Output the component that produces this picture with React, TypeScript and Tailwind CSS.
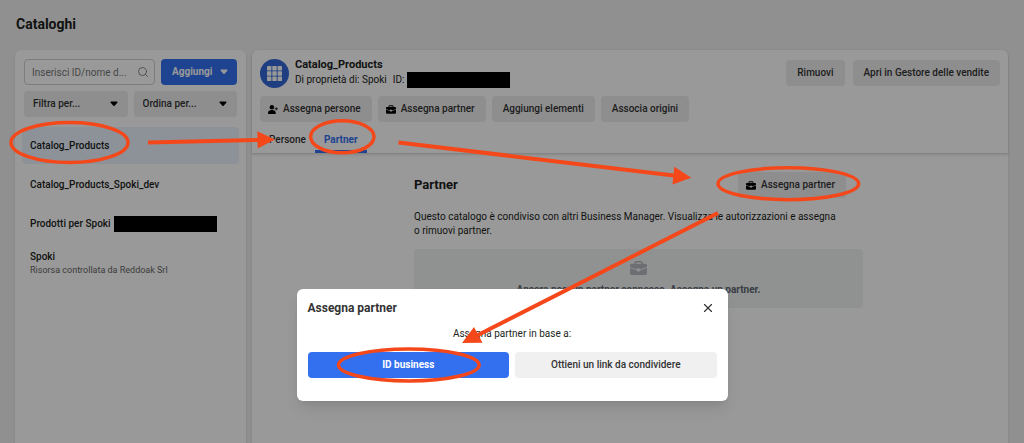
import React, { useState } from 'react';
import { Search, X } from 'lucide-react';
import { clsx } from 'clsx';

const catalogs = [
  { name: 'Catalog_Products' },
  { name: 'Catalog_Products_Spoki_dev' },
  { name: 'Prodotti per Spoki', redacted: true },
  { name: 'Spoki', note: 'Risorsa controllata da Reddoak Srl' },
];

const tabs = ['Persone', 'Partner'];

const greyButton = 'h-[26px] flex items-center justify-center rounded bg-[#ededed] font-medium text-[#333] whitespace-nowrap';
const iconButton = 'pl-2 pr-[11px] gap-[5px]';

function Caret({ className }: { className?: string }) {
  return (
    <svg viewBox="0 0 8 6" className={clsx('w-2 h-[6px]', className)} fill="currentColor" aria-hidden="true">
      <path d="M1.2 .5h5.6c.7 0 1 .8.5 1.3L4.6 4.7a.85.85 0 0 1-1.2 0L.7 1.8C.2 1.3.5.5 1.2.5Z" />
    </svg>
  );
}

function Briefcase({ className }: { className?: string }) {
  return (
    <svg viewBox="0 0 18 15" className={className} fill="currentColor" aria-hidden="true">
      <path fillRule="evenodd" d="M4.500 3V2a2 2 0 0 1 2-2h5a2 2 0 0 1 2 2v1h3A1.500 1.500 0 0 1 18 4.500V6.500L11 9.200V8H7v1.200L0 6.500V4.500A1.500 1.500 0 0 1 1.500 3Zm1.500 0h6V2.200a.7.7 0 0 0-.7-.7H6.700a.7.7 0 0 0-.7.7V3Z" />
      <path d="M0 7.300 7.200 10.200Q9 12.600 10.800 10.200L18 7.300v6.200a1.500 1.500 0 0 1-1.500 1.500h-15A1.500 1.500 0 0 1 0 13.500Z" />
    </svg>
  );
}

function PersonAdd() {
  return (
    <svg viewBox="0 0 18 16" className="w-[10px] h-[9px] text-black" fill="currentColor" aria-hidden="true">
      <circle cx="7" cy="4" r="4" />
      <path d="M0 15c0-4 2.500-6 7-6s7 2 7 6c0 .600-.4 1-1 1H1c-.6 0-1-.4-1-1Z" />
      <path d="M14 4h1.500v2H18v1.500h-2.500v2H14v-2h-2V6h2Z" />
    </svg>
  );
}

function FilterSelect({ label }: { label: string }) {
  return (
    <div className="relative flex-1">
      <select aria-label={label} className="w-full h-[26px] appearance-none rounded bg-[#ededed] pl-[9px] font-medium text-[#333]">
        <option>{label}</option>
      </select>
      <Caret className="absolute right-[10px] top-[10px] pointer-events-none text-black" />
    </div>
  );
}

function Sidebar() {
  const [selected, setSelected] = useState(0);

  return (
    <aside className="w-[231px] shrink-0 rounded-t-md bg-white shadow-sm pt-[9px] px-[7px]">
      <div className="px-[2px] space-y-[6px]">
        <div className="flex gap-[6px]">
          <div className="relative flex-1">
            <input
              aria-label="Cerca un catalogo"
              placeholder="Inserisci ID/nome d..."
              className="w-full h-[26px] rounded border border-[#cfd1d5] pl-[7px] pr-6 placeholder:text-[#777] placeholder:opacity-100"
            />
            <Search className="absolute right-[6px] top-[7px] w-3 h-3 text-[#888]" strokeWidth={2} />
          </div>
          <button className="w-[76px] h-[26px] flex items-center justify-between pl-[11px] pr-[9px] rounded bg-[#3370f0] text-white font-bold">
            Aggiungi
            <Caret />
          </button>
        </div>
        <div className="flex gap-[6px]">
          <FilterSelect label="Filtra per..." />
          <FilterSelect label="Ordina per..." />
        </div>
      </div>

      <ul className="mt-[10px] space-y-[2px]">
        {catalogs.map((c, i) => (
          <li key={c.name}>
            <button
              onClick={() => setSelected(i)}
              className={clsx(
                'w-full h-[37px] rounded px-2 text-left font-medium',
                i === selected && 'bg-[#ebf3ff]'
              )}
            >
              <span className="flex items-center gap-[3px]">
                {c.name}
                {c.redacted && <span className="w-[103px] h-4 bg-black" />}
              </span>
              {c.note && <span className="block text-[9px] leading-3 font-normal text-[#666]">{c.note}</span>}
            </button>
          </li>
        ))}
      </ul>
    </aside>
  );
}

function CatalogDetail() {
  const [tab, setTab] = useState('Partner');

  return (
    <main className="flex-1 min-w-0 rounded-t-md bg-white shadow-sm">
      <header className="rounded-t-md border-b border-[#dcdcdc] shadow-sm pt-2 px-2">
        <div className="flex items-start">
          <div className="w-[29px] h-[29px] mt-px shrink-0 rounded-full bg-[#3568d8] flex items-center justify-center text-white">
            <svg viewBox="0 0 15 15" className="w-[15px] h-[15px]" fill="currentColor" aria-hidden="true">
              {[0, 5.3, 10.6].map((y) =>
                [0, 5.3, 10.6].map((x) => <rect key={`${x}-${y}`} x={x} y={y} width="4.4" height="4.4" rx=".4" />)
              )}
            </svg>
          </div>
          <div className="ml-[6px] flex-1">
            <h2 className="text-[11px] leading-[14px] font-bold">Catalog_Products</h2>
            <p className="flex items-center leading-4">
              Di proprietà di: Spoki <span className="ml-[6px]">ID:</span>
              <span className="ml-[3px] w-[103px] h-4 bg-black" />
            </p>
          </div>
          <div className="flex gap-2 mt-[2px]">
            <button className={clsx(greyButton, 'px-[11px]')}>Rimuovi</button>
            <button className={clsx(greyButton, 'px-[11px]')}>Apri in Gestore delle vendite</button>
          </div>
        </div>

        <div className="flex gap-[6px] mt-2">
          <button className={clsx(greyButton, iconButton)}><PersonAdd />Assegna persone</button>
          <button className={clsx(greyButton, iconButton)}><Briefcase className="w-[10px] h-[9px] text-black" />Assegna partner</button>
          <button className={clsx(greyButton, 'px-[11px]')}>Aggiungi elementi</button>
          <button className={clsx(greyButton, 'px-[11px]')}>Associa origini</button>
        </div>

        <nav className="flex mt-1 pt-[3px]" role="tablist">
          {tabs.map((t) => (
            <button
              key={t}
              role="tab"
              aria-selected={t === tab}
              onClick={() => setTab(t)}
              className={clsx(
                'h-6 px-[9px] border-b-[3px]',
                t === tab ? 'border-[#3370f0] text-[#3370f0] font-bold' : 'border-transparent font-medium text-[#333]'
              )}
            >
              {t}
            </button>
          ))}
        </nav>
      </header>

      <section className="pl-[17px]">
        <div className="max-w-[449px] mx-auto pt-[18px]">
          <div className="flex items-center justify-between pr-[17px]">
            <h3 className="text-[13px] font-bold">Partner</h3>
            <button className={clsx(greyButton, iconButton)}><Briefcase className="w-[10px] h-[9px] text-black" />Assegna partner</button>
          </div>
          <p className="mt-3 pr-[23px] leading-[14px]">
            Questo catalogo è condiviso con altri Business Manager. Visualizza le autorizzazioni e assegna o rimuovi partner.
          </p>
          <div className="mt-[11px] h-[59px] rounded bg-[#f0f4f4] flex flex-col items-center pt-3 text-[#606770]">
            <Briefcase className="w-[17px] h-[14px] text-[#b4b7bd]" />
            <p className="mt-2 font-bold">Ancora nessun partner connesso. Assegna un partner.</p>
          </div>
        </div>
      </section>
    </main>
  );
}

function AssignDialog() {
  return (
    <div className="absolute inset-0 bg-black/40 flex items-start justify-center pt-[289px]">
      <div role="dialog" aria-labelledby="assign-title" className="w-[431px] rounded-md bg-white shadow-lg pt-3 px-[11px] pb-[23px]">
        <div className="flex items-center justify-between">
          <h2 id="assign-title" className="text-[12px] leading-[14px] font-bold text-[#333]">Assegna partner</h2>
          <button aria-label="Chiudi" className="mr-[2px] text-[#333]">
            <X className="w-[14px] h-[14px]" strokeWidth={2} />
          </button>
        </div>
        <p className="mt-3 text-center leading-[14px]">Assegna partner in base a:</p>
        <div className="mt-[11px] grid grid-cols-2 gap-[6px]">
          <button className="h-[26px] rounded bg-[#3370f0] text-white font-bold">ID business</button>
          <button className="h-[26px] rounded bg-[#f0f0f0] font-medium text-[#333]">Ottieni un link da condividere</button>
        </div>
      </div>
    </div>
  );
}

// Tutorial marks: circled controls and the arrows that join them
function Annotations() {
  return (
    <svg viewBox="0 0 1024 443" className="absolute top-0 left-0 w-[1024px] h-[443px] pointer-events-none" aria-hidden="true">
      <g fill="none" stroke="#f4481b" strokeWidth="3.5">
        <ellipse cx="69.5" cy="142.5" rx="58.5" ry="20" />
        <ellipse cx="342.3" cy="136.8" rx="31.7" ry="16" />
        <ellipse cx="788.3" cy="183.7" rx="70.3" ry="16" />
        <ellipse cx="408.8" cy="365" rx="70.3" ry="16" />
      </g>
      <g stroke="#f4481b" strokeWidth="4">
        <path d="M148 142.500 260 139.900" />
        <path d="M398.500 142.500 676 175.800" />
        <path d="M718 213 475 336.500" />
      </g>
      <g fill="#f4481b">
        <path d="M257.300 131.300 274.800 139.500 257.700 148.500Z" />
        <path d="M674.300 166.800 691.300 177.800 672.500 184.500Z" />
        <path d="M474 327 482.500 342.800 462 343Z" />
      </g>
    </svg>
  );
}

export default function App() {
  return (
    <div className="relative min-h-screen flex flex-col overflow-hidden bg-[#f0f0f0] font-[Roboto,sans-serif] text-[10px] leading-[14px] text-[#1c1e21]">
      <h1 className="pt-[15px] pb-[17px] px-4 text-[14px] leading-[18px] font-bold">Cataloghi</h1>
      <div className="flex-1 flex gap-[6px] pl-[15px] pr-4">
        <Sidebar />
        <CatalogDetail />
      </div>
      <AssignDialog />
      <Annotations />
    </div>
  );
}
